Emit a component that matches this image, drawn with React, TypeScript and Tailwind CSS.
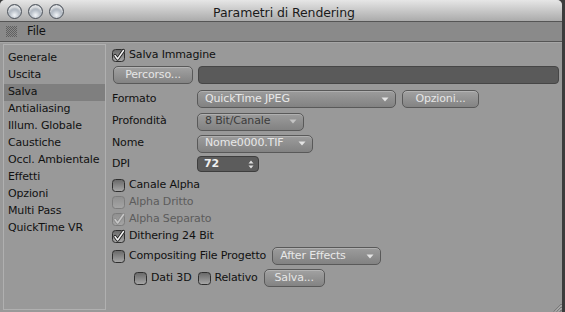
import React from 'react';

const Arrow = ({ color = '#e4e4e4' }: { color?: string }) => (
  <svg width="8" height="5" viewBox="0 0 8 5" className="shrink-0">
    <path d="M0.5 0.5 L7.5 0.5 L4 4.5 Z" fill={color} />
  </svg>
);

const CheckBox = ({ checked, disabled }: { checked?: boolean; disabled?: boolean }) => (
  <div
    className={`relative w-[13px] h-[13px] shrink-0 rounded-[3.5px] border ${
      disabled
        ? 'border-[#7c7c7c] bg-gradient-to-b from-[#909090] to-[#a4a4a4]'
        : 'border-[#2f2f2f] bg-gradient-to-b from-[#6a6a6a] to-[#a6a6a6]'
    }`}
  >
    {checked && (
      <svg width="14" height="14" viewBox="0 0 14 14" className="absolute left-[-1px] top-[-2px]">
        <path d="M3 7.5 L5.6 11 L11.5 2.5" stroke={disabled ? '#8a8a8a' : '#1e1e1e'} strokeWidth="3.2" fill="none" strokeLinecap="round" strokeLinejoin="round" />
        <path d="M3 7.5 L5.6 11 L11.5 2.5" stroke={disabled ? '#c8c8c8' : '#f4f4f4'} strokeWidth="1.5" fill="none" strokeLinecap="round" strokeLinejoin="round" />
      </svg>
    )}
  </div>
);

const Button = ({ label, className }: { label: string; className: string }) => (
  <div
    className={`h-[18px] flex items-center justify-center rounded-[5px] border border-[#595959] bg-gradient-to-b from-[#a2a2a2] to-[#838383] text-[#e6e6e6] shadow-[inset_0_1px_0_#b4b4b4] ${className}`}
  >
    {label}
  </div>
);

const Popup = ({ label, className, disabled }: { label: string; className: string; disabled?: boolean }) => (
  <div
    className={`h-[18px] flex items-center pl-[7px] pr-[6px] rounded-[5px] border border-[#595959] bg-gradient-to-b from-[#9c9c9c] to-[#828282] shadow-[inset_0_1px_0_#b0b0b0] ${
      disabled ? 'text-[#3c3c3c]' : 'text-[#e8e8e8]'
    } ${className}`}
  >
    <span>{label}</span>
    <span className="ml-auto">
      <Arrow color={disabled ? '#c4c4c4' : '#e4e4e4'} />
    </span>
  </div>
);

const Light = () => (
  <div className="w-[15px] h-[15px] rounded-full border border-[#4e545c] bg-[radial-gradient(circle_at_50%_78%,#f2f5f8_0%,#b0b8c2_45%,#5e6671_100%)] shadow-[inset_0_3px_2px_rgba(255,255,255,0.75)]" />
);

const Grip = () => (
  <svg width="11" height="11" viewBox="0 0 11 11">
    {Array.from({ length: 11 }).map((_, r) =>
      Array.from({ length: 11 }).map((__, c) =>
        (r + c) % 2 === 0 ? <rect key={`${r}-${c}`} x={c} y={r} width="1" height="1" fill="#606060" /> : null
      )
    )}
  </svg>
);

const pages = [
  'Generale',
  'Uscita',
  'Salva',
  'Antialiasing',
  'Illum. Globale',
  'Caustiche',
  'Occl. Ambientale',
  'Effetti',
  'Opzioni',
  'Multi Pass',
  'QuickTime VR',
];

export default function App() {
  return (
    <div className="w-[565px] h-[312px] bg-[#3c3c3c] overflow-hidden font-['DejaVu_Sans','Liberation_Sans',sans-serif] text-[11px] tracking-[-0.15px] text-[#111]">
      <div className="relative w-[562px] h-[312px] flex flex-col rounded-t-[5px] overflow-hidden bg-[#999999]">
        {/* Title bar */}
        <div className="relative h-[22px] shrink-0 flex items-center border-b border-[#555] bg-gradient-to-b from-[#e6e6e6] to-[#ababab]">
          <div className="flex gap-[6px] pl-[7px] pt-[2px]">
            <Light />
            <Light />
            <Light />
          </div>
          <div className="absolute inset-x-0 top-[4px] text-center text-[12.5px] tracking-[-0.1px] text-[#1a1a1a] pl-[6px]">
            Parametri di Rendering
          </div>
        </div>

        {/* Menu bar */}
        <div className="h-[20px] shrink-0 flex items-center gap-[10px] pl-[6px] bg-[#8a8a8a] border-b border-[#555]">
          <Grip />
          <span className="text-[11.5px]">File</span>
        </div>

        {/* Body */}
        <div className="flex-1 flex border-t border-[#a6a6a6]">
          <div className="ml-[3px] mt-[1px] mb-[2px] w-[103px] border border-[#b0b0b0] pt-[5px]">
            {pages.map((p) => (
              <div
                key={p}
                className={`h-[17px] flex items-center pl-[4px] ${p === 'Salva' ? 'bg-[#7f7f7f]' : ''}`}
              >
                {p}
              </div>
            ))}
          </div>

          <div className="flex-1 flex flex-col pl-[6px] pt-[4px] pr-[3px]">
            <div className="h-[17px] flex items-center gap-[4px]">
              <CheckBox checked />
              <span>Salva Immagine</span>
            </div>
            <div className="h-[22px] flex items-center gap-[5px]">
              <Button label="Percorso..." className="w-[80px] ml-[1px]" />
              <div className="flex-1 h-[18px] rounded-[4px] border border-[#464646] bg-[#5a5a5a]" />
            </div>
            <div className="h-[26px] flex items-center">
              <span className="w-[85px]">Formato</span>
              <Popup label="QuickTime JPEG" className="w-[199px]" />
              <Button label="Opzioni..." className="w-[77px] ml-[6px]" />
            </div>
            <div className="h-[19px] flex items-center">
              <span className="w-[85px]">Profondità</span>
              <Popup label="8 Bit/Canale" className="w-[107px]" disabled />
            </div>
            <div className="h-[25px] flex items-center">
              <span className="w-[85px]">Nome</span>
              <Popup label="Nome0000.TIF" className="w-[116px]" />
            </div>
            <div className="h-[16px] flex items-center">
              <span className="w-[85px]">DPI</span>
              <div className="w-[62px] h-[16px] flex items-center pl-[6px] pr-[4px] rounded-[4px] border border-[#3e3e3e] bg-[#5c5c5c] text-[#f0f0f0] font-semibold">
                <span>72</span>
                <svg width="6" height="9" viewBox="0 0 6 9" className="ml-auto">
                  <path d="M0.5 3.5 L3 0.5 L5.5 3.5 Z M0.5 5.5 L3 8.5 L5.5 5.5 Z" fill="#e0e0e0" />
                </svg>
              </div>
            </div>
            <div className="h-[17px] mt-[5px] flex items-center gap-[4px]">
              <CheckBox />
              <span>Canale Alpha</span>
            </div>
            <div className="h-[17px] flex items-center gap-[4px] text-[#5c5c5c]">
              <CheckBox disabled />
              <span>Alpha Dritto</span>
            </div>
            <div className="h-[17px] flex items-center gap-[4px] text-[#5c5c5c]">
              <CheckBox checked disabled />
              <span>Alpha Separato</span>
            </div>
            <div className="h-[17px] flex items-center gap-[4px]">
              <CheckBox checked />
              <span>Dithering 24 Bit</span>
            </div>
            <div className="h-[20px] mt-[1px] flex items-center gap-[4px]">
              <CheckBox />
              <span>Compositing File Progetto</span>
              <Popup label="After Effects" className="w-[109px] ml-[2px]" />
            </div>
            <div className="h-[22px] mt-[1px] flex items-center pl-[22px] gap-[4px]">
              <CheckBox />
              <span>Dati 3D</span>
              <span className="ml-[2px]">
                <CheckBox />
              </span>
              <span>Relativo</span>
              <Button label="Salva..." className="w-[61px] ml-[2px]" />
            </div>
          </div>
        </div>

        {/* Resize grip */}
        <svg width="9" height="9" viewBox="0 0 9 9" className="absolute right-0 bottom-0">
          <path d="M8.5 1 L1 8.5 M8.5 4 L4 8.5 M8.5 7 L7 8.5" stroke="#5a5a5a" strokeWidth="1" />
          <path d="M8.5 2 L2 8.5 M8.5 5 L5 8.5" stroke="#c0c0c0" strokeWidth="1" />
        </svg>
      </div>
    </div>
  );
}
